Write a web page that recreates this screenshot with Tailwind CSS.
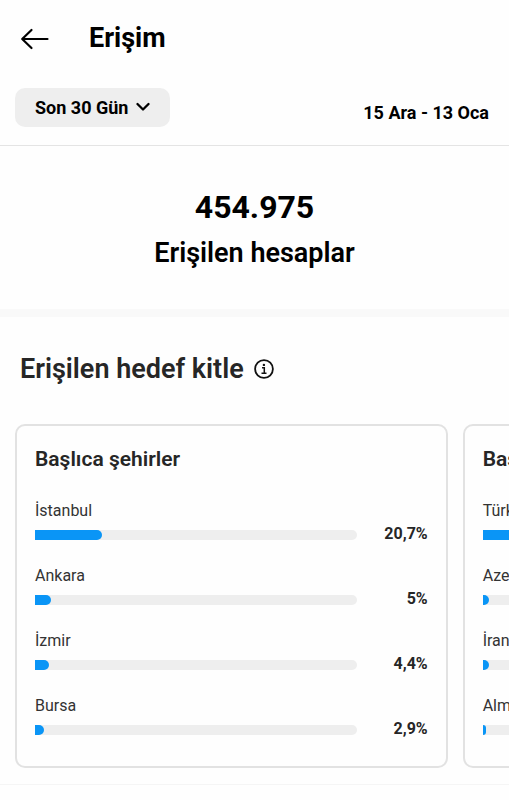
<!DOCTYPE html>
<html lang="tr">
<head>
<meta charset="utf-8">
<meta name="viewport" content="width=device-width, initial-scale=1">
<title>Erişim</title>
<script src="https://cdn.jsdelivr.net/npm/@tailwindcss/browser@4"></script>
</head>
<body class="bg-[#fefefe] font-['Roboto',sans-serif] text-[#262626] overflow-x-hidden">
<header class="flex items-center gap-[39px] px-5 h-[75px] text-black">
  <button type="button" aria-label="Geri" class="shrink-0">
    <svg class="block w-[30px] h-6" viewBox="0 0 30 24" fill="none" stroke="currentColor" stroke-width="2.2" stroke-linecap="round" stroke-linejoin="round"><path d="M27.500 13H2.500M11.500 4 2.200 13l9.300 9"/></svg>
  </button>
  <h1 class="text-[27px] leading-8 font-bold">Erişim</h1>
</header>
<main>
  <div class="flex items-center justify-between pl-[15px] pr-5 pt-3 pb-[18px] border-b border-[#e4e4e4] text-black">
    <div class="relative">
      <select aria-label="Tarih aralığı" class="appearance-none block h-[39px] pt-px pl-5 pr-[41px] rounded-[10px] bg-[#eeeeee] text-lg font-bold">
        <option>Son 30 Gün</option>
      </select>
      <svg class="absolute right-5 top-1/2 -translate-y-1/2 w-[14px] h-[10px] pointer-events-none" viewBox="0 0 14 10" fill="none" stroke="currentColor" stroke-width="2.300" stroke-linecap="round" stroke-linejoin="round"><path d="M1.500 2 7 7.500 12.500 2"/></svg>
    </div>
    <p class="pt-3 text-lg font-bold">15 Ara - 13 Oca</p>
  </div>
  <section class="flex flex-col items-center gap-2 pt-[39px] pb-10 border-b-8 border-[#f9f9f9] text-black">
    <p class="text-[32px] leading-11 font-bold">454.975</p>
    <h2 class="text-[27px] leading-8 font-semibold">Erişilen hesaplar</h2>
  </section>
  <section class="border-b border-[#f5f5f5] pb-4">
    <div class="flex items-center gap-[10px] px-5 pt-9">
      <h2 class="text-[27px] leading-8 font-semibold">Erişilen hedef kitle</h2>
      <button type="button" aria-label="Bilgi">
        <svg class="block size-5" viewBox="0 0 20 20" fill="none" stroke="#111" stroke-width="1.800"><circle cx="10" cy="10" r="8.900"/><path d="M8 8.800h2.300v5M7.500 14.200h5" stroke-width="1.500"/><circle cx="9.900" cy="5.900" r="1.200" fill="#111" stroke="none"/></svg>
      </button>
    </div>
    <div id="cards" class="flex gap-[15px] px-[15px] pt-[39px] overflow-x-auto [scrollbar-width:none]"></div>
  </section>
</main>
<template id="card">
  <article class="shrink-0 w-[85vw] rounded-[10px] border-2 border-[#e2e2e2] px-[18px] pt-[19px] pb-[31px]">
    <h3 class="text-[21px] leading-7 font-semibold"></h3>
    <ul class="flex flex-col gap-[26px] pt-7"></ul>
  </article>
</template>
<template id="row">
  <li>
    <p class="text-base leading-5 text-[#333333]"></p>
    <div class="flex items-end justify-between pt-[7px]">
      <div role="meter" aria-valuemin="0" aria-valuemax="100" class="w-[82%] h-[10px] rounded-r-full rounded-l-[2px] bg-[#eeeeee] overflow-hidden">
        <div class="h-full rounded-r-full bg-[#0a95f6]"></div>
      </div>
      <span class="text-base leading-3 font-bold"></span>
    </div>
  </li>
</template>
<script>
const groups = [
  ['Başlıca şehirler', [['İstanbul', 20.7], ['Ankara', 5], ['İzmir', 4.4], ['Bursa', 2.9]]],
  ['Başlıca ülkeler', [['Türkiye', 90], ['Azerbaycan', 1.9], ['İran', 1.9], ['Almanya', 1.1]]]
];
for (const [title, rows] of groups) {
  const card = document.getElementById('card').content.cloneNode(true);
  card.querySelector('h3').textContent = title;
  for (const [name, value] of rows) {
    const row = document.getElementById('row').content.cloneNode(true);
    const meter = row.querySelector('[role=meter]');
    row.querySelector('p').textContent = name;
    row.querySelector('span').textContent = value.toLocaleString('tr') + '%';
    meter.setAttribute('aria-label', name);
    meter.setAttribute('aria-valuenow', value);
    meter.firstElementChild.style.width = value + '%';
    card.querySelector('ul').append(row);
  }
  document.getElementById('cards').append(card);
}
</script>
</body>
</html>
